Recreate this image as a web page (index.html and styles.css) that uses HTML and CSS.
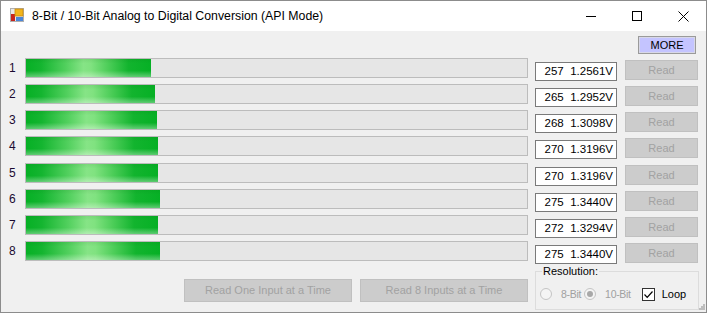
FILE: index.html
```html
<!DOCTYPE html>
<html>
<head>
<meta charset="utf-8">
<link rel="stylesheet" href="styles.css">
</head>
<body>
<div class="window">
  <div class="titlebar">
    <svg class="appicon" width="14" height="14" viewBox="0 0 14 14">
      <rect x="0.5" y="0.5" width="13" height="13" fill="#e8e8e8" stroke="#b0b0b0"/>
      <rect x="1" y="6" width="4" height="7" fill="#c8241c"/>
      <rect x="5" y="1" width="8" height="7" fill="#f2b51c" stroke="#c88a10" stroke-width="0.8"/>
      <rect x="6" y="9" width="7" height="4" fill="#4a86d8"/>
    </svg>
    <span class="title">8-Bit / 10-Bit Analog to Digital Conversion (API Mode)</span>
    <div class="controls">
      <div class="ctl"><svg width="10" height="10" viewBox="0 0 10 10"><line x1="0" y1="5.5" x2="10" y2="5.5" stroke="#000" stroke-width="1"/></svg></div>
      <div class="ctl"><svg width="10" height="10" viewBox="0 0 10 10"><rect x="0.5" y="0.5" width="9" height="9" fill="none" stroke="#000" stroke-width="1"/></svg></div>
      <div class="ctl"><svg width="11" height="11" viewBox="0 0 11 11"><path d="M0.5 0.5 L10.5 10.5 M10.5 0.5 L0.5 10.5" stroke="#000" stroke-width="1"/></svg></div>
    </div>
  </div>
  <div class="content">
    <div class="topbar"><div class="more">MORE</div></div>
    <div class="rows">
      <div class="row"><span class="num">1</span><div class="bar"><div class="fill" style="width:24.95%"></div></div><div class="val">257&nbsp; 1.2561V</div><div class="read">Read</div></div>
      <div class="row"><span class="num">2</span><div class="bar"><div class="fill" style="width:25.75%"></div></div><div class="val">265&nbsp; 1.2952V</div><div class="read">Read</div></div>
      <div class="row"><span class="num">3</span><div class="bar"><div class="fill" style="width:26.05%"></div></div><div class="val">268&nbsp; 1.3098V</div><div class="read">Read</div></div>
      <div class="row"><span class="num">4</span><div class="bar"><div class="fill" style="width:26.25%"></div></div><div class="val">270&nbsp; 1.3196V</div><div class="read">Read</div></div>
      <div class="row"><span class="num">5</span><div class="bar"><div class="fill" style="width:26.25%"></div></div><div class="val">270&nbsp; 1.3196V</div><div class="read">Read</div></div>
      <div class="row"><span class="num">6</span><div class="bar"><div class="fill" style="width:26.65%"></div></div><div class="val">275&nbsp; 1.3440V</div><div class="read">Read</div></div>
      <div class="row"><span class="num">7</span><div class="bar"><div class="fill" style="width:26.4%"></div></div><div class="val">272&nbsp; 1.3294V</div><div class="read">Read</div></div>
      <div class="row"><span class="num">8</span><div class="bar"><div class="fill" style="width:26.65%"></div></div><div class="val">275&nbsp; 1.3440V</div><div class="read">Read</div></div>
    </div>
    <div class="bottom">
      <div class="btns">
        <div class="bigbtn">Read One Input at a Time</div>
        <div class="bigbtn">Read 8 Inputs at a Time</div>
      </div>
      <fieldset class="group">
        <legend>Resolution:</legend>
        <div class="opts">
          <span class="radio"></span><span class="dis lbl1">8-Bit</span>
          <span class="radio on"></span><span class="dis lbl2">10-Bit</span>
          <span class="check"><svg width="11" height="11" viewBox="0 0 11 11"><path d="M1.5 5.5 L4.2 8.3 L9.5 2.5" fill="none" stroke="#000" stroke-width="1.2"/></svg></span><span class="loop">Loop</span>
        </div>
      </fieldset>
    </div>
  </div>
  <svg class="grip" width="6" height="6" viewBox="0 0 6 6">
    <rect x="4" y="0" width="2" height="2" fill="#bdbdbd"/>
    <rect x="2" y="2" width="2" height="2" fill="#bdbdbd"/>
    <rect x="4" y="2" width="2" height="2" fill="#bdbdbd"/>
    <rect x="0" y="4" width="2" height="2" fill="#bdbdbd"/>
    <rect x="2" y="4" width="2" height="2" fill="#bdbdbd"/>
    <rect x="4" y="4" width="2" height="2" fill="#bdbdbd"/>
  </svg>
</div>
</body>
</html>
```
FILE: styles.css
```css
html, body { margin: 0; padding: 0; background: #fff; }
body { font-family: "Liberation Sans", Arial, sans-serif; }
.window {
  position: relative;
  width: 707px; height: 313px;
  box-sizing: border-box;
  border: 1px solid #8c8c8c;
  background: #f0f0f0;
  display: flex; flex-direction: column;
  overflow: hidden;
}
.titlebar {
  height: 30px; background: #fff;
  display: flex; align-items: center;
  flex: none;
}
.appicon { margin-left: 9px; margin-top: -2px; }
.title { margin-left: 8px; font-size: 12.3px; color: #000; margin-top: -1px; }
.controls { margin-left: auto; display: flex; height: 30px; }
.ctl { width: 46px; height: 30px; display: flex; align-items: center; justify-content: center; }
.content { display: flex; flex-direction: column; }
.topbar { display: flex; justify-content: flex-end; padding-top: 5px; padding-right: 10px; }
.more {
  width: 58px; height: 18px; box-sizing: border-box;
  border: 1px solid #9a9a9a; box-shadow: inset 0 0 0 1px #d8d8e8;
  background: #c4c4ff;
  font-size: 11px; color: #000;
  display: flex; align-items: center; justify-content: center;
}
.rows { display: flex; flex-direction: column; gap: 6.14px; margin-top: 4px; }
.row { display: flex; height: 20px; align-items: flex-start; }
.num { width: 24px; box-sizing: border-box; padding-left: 8px; font-size: 12px; line-height: 20px; color: #1a0a30; }
.bar {
  width: 503px; height: 20px; box-sizing: border-box;
  border: 1px solid #bcbcbc; background: #e6e6e6;
}
.fill {
  height: 100%;
  background:
    linear-gradient(180deg, rgba(0,80,0,0.08) 0%, rgba(255,255,255,0) 25%, rgba(255,255,255,0) 65%, rgba(255,255,255,0.35) 100%),
    linear-gradient(90deg, #06b025 0%, #14b530 12%, #52d05e 32%, #86e486 46%, #80e280 52%, #4ccd58 66%, #12b42e 82%, #06b025 100%);
}
.val {
  margin-left: 7px; margin-top: 4px;
  width: 82px; height: 19px; box-sizing: border-box;
  border: 1px solid #7a7a7a; background: #fff;
  font-size: 11.5px; line-height: 17px; color: #000;
  text-align: right; padding-right: 3px;
}
.read {
  margin-left: 8px; margin-top: 2px;
  width: 73px; height: 20px; box-sizing: border-box;
  border: 1px solid #c0c0c0; background: #cccccc;
  font-size: 11px; color: #a2a2a2;
  display: flex; align-items: center; justify-content: center;
}
.bottom { display: flex; align-items: flex-start; margin-top: 4px; }
.btns { display: flex; gap: 8px; margin-left: 183px; margin-top: 14px; }
.bigbtn {
  width: 168px; height: 23px; box-sizing: border-box;
  border: 1px solid #c0c0c0; background: #cccccc;
  font-size: 11px; color: #a2a2a2;
  display: flex; align-items: center; justify-content: center;
}
.group {
  margin: 0 0 0 7px; padding: 0 0 0 4px;
  width: 164px; height: 45px; box-sizing: border-box;
  border: 1px solid #dcdcdc;
  min-width: 0;
}
.group legend { font-size: 11px; color: #000; padding: 0 1px; margin-left: 2px; line-height: 13px; }
.opts { display: flex; align-items: center; margin-top: 10px; font-size: 11px; }
.radio {
  width: 12px; height: 12px; box-sizing: border-box;
  border: 1px solid #c4c4c4; border-radius: 50%; background: #f4f4f4;
  position: relative; flex: none;
}
.radio.on::after {
  content: ""; position: absolute; left: 2px; top: 2px;
  width: 6px; height: 6px; border-radius: 50%; background: #a8a8a8;
}
.dis { color: #a0a0a0; font-size: 10.5px; letter-spacing: -0.3px; }
.lbl1 { margin-left: 9px; margin-right: 3px; }
.lbl2 { margin-left: 9px; margin-right: 11px; }
.check {
  width: 13px; height: 13px; box-sizing: border-box; flex: none;
  border: 1px solid #333; background: #fff;
  display: flex; align-items: center; justify-content: center;
}
.loop { margin-left: 7px; color: #000; }
.grip { position: absolute; right: 1px; bottom: 2px; }
```
